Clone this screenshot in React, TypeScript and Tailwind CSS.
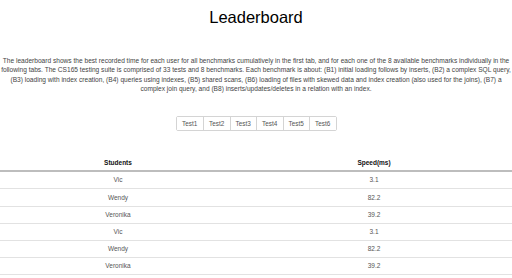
import React, { useState } from "react";

const TABS = ["Test1", "Test2", "Test3", "Test4", "Test5", "Test6"];

interface ScoreRow {
  student: string;
  speed: string;
}

const ROWS: ScoreRow[] = [
  { student: "Vic", speed: "3.1" },
  { student: "Wendy", speed: "82.2" },
  { student: "Veronika", speed: "39.2" },
  { student: "Vic", speed: "3.1" },
  { student: "Wendy", speed: "82.2" },
  { student: "Veronika", speed: "39.2" },
];

// broken into the same lines as the original page
const DESCRIPTION_LINES = [
  "The leaderboard shows the best recorded time for each user for all benchmarks cumulatively in the first tab, and for each one of the 8 available benchmarks individually in the",
  "following tabs. The CS165 testing suite is comprised of 33 tests and 8 benchmarks. Each benchmark is about: (B1) initial loading follows by inserts, (B2) a complex SQL query,",
  "(B3) loading with index creation, (B4) queries using indexes, (B5) shared scans, (B6) loading of files with skewed data and index creation (also used for the joins), (B7) a",
  "complex join query, and (B8) inserts/updates/deletes in a relation with an index.",
];

function TabBar({
  active,
  onSelect,
}: {
  active: number;
  onSelect: (i: number) => void;
}) {
  return (
    <div className="flex justify-center">
      <div className="flex h-[15px] rounded-[2px] border border-[#d4d4d4]">
        {TABS.map((tab, i) => (
          <button
            key={tab}
            onClick={() => onSelect(i)}
            className={
              "flex w-[26.5px] items-center justify-center bg-white text-[6.4px] " +
              (i > 0 ? "border-l border-[#d4d4d4] " : "") +
              (i === active ? "text-[#555]" : "text-[#555]")
            }
          >
            {tab}
          </button>
        ))}
      </div>
    </div>
  );
}

export default function App() {
  const [activeTab, setActiveTab] = useState(0);

  return (
    <div
      className="min-h-screen bg-white"
      style={{ fontFamily: '"Liberation Sans", Arial, sans-serif' }}
    >
      <h1 className="pt-[7px] text-center text-[16.5px] leading-[20px] text-black">
        Leaderboard
      </h1>

      <p className="mt-[29px] text-center text-[6.6px] leading-[9.3px] text-[#444]">
        {DESCRIPTION_LINES.map((line, i) => (
          <span key={i} className="block whitespace-nowrap">
            {line}
          </span>
        ))}
      </p>

      <div className="mt-[23px]">
        <TabBar active={activeTab} onSelect={setActiveTab} />
      </div>

      <div className="mt-[22px]">
        <div className="grid h-[19px] grid-cols-[236px_1fr] items-center border-b-2 border-[#bdbdbd] pt-[3px] text-[6.5px] font-semibold text-[#111]">
          <div className="text-center">Students</div>
          <div className="text-center">Speed(ms)</div>
        </div>
        {ROWS.map((row, i) => (
          <div
            key={i}
            className="grid h-[17.2px] grid-cols-[236px_1fr] items-center border-b border-[#e2e2e2] text-[6.5px] text-[#555]"
          >
            <div className="text-center">{row.student}</div>
            <div className="text-center">{row.speed}</div>
          </div>
        ))}
      </div>
    </div>
  );
}
